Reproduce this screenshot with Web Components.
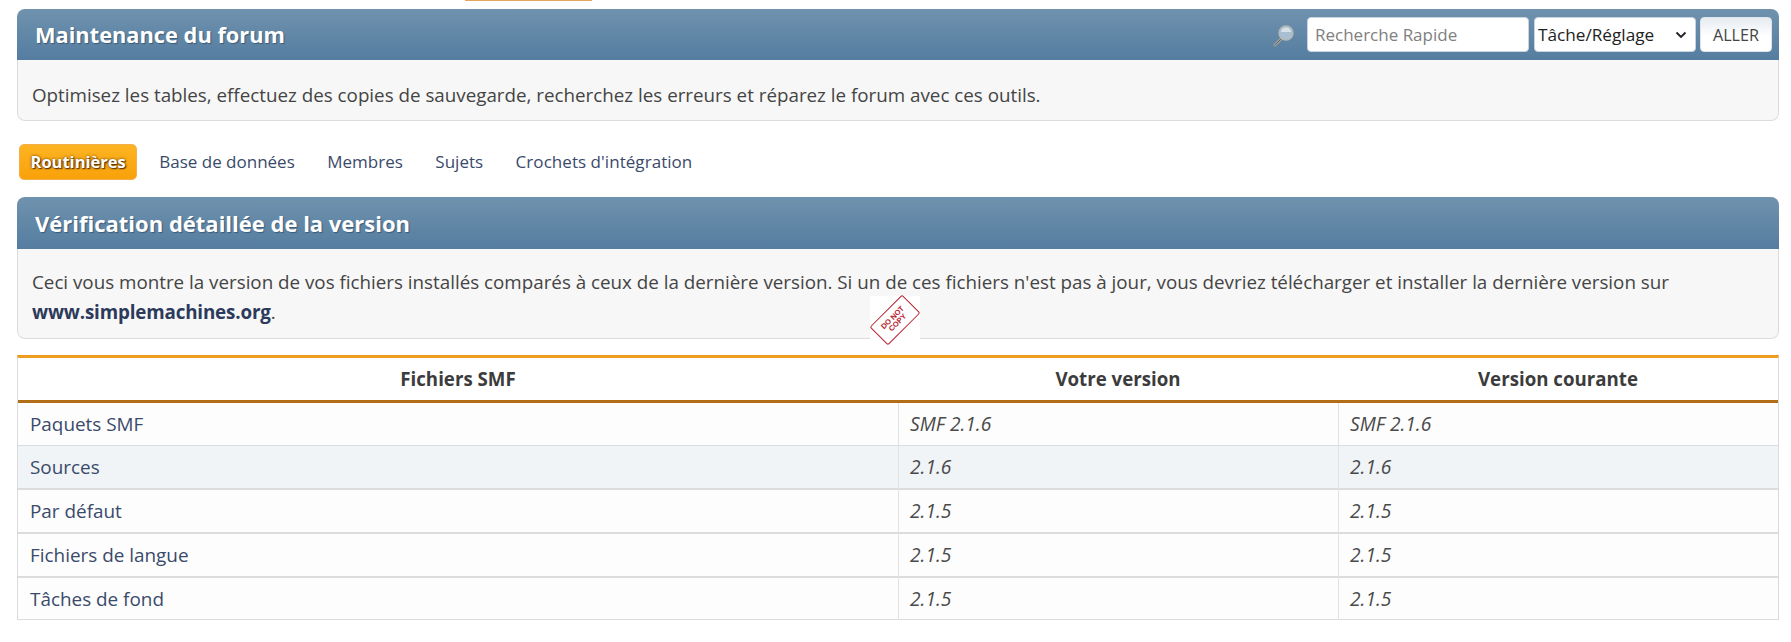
<!DOCTYPE html>
<html lang="fr">
<head>
<meta charset="utf-8">
<title>Maintenance du forum</title>
<style>
  html, body { margin: 0; background: #fff; }
  body { padding: 9px 12px 0 17px; font: 18.8px/1.5 "Open Sans", "Noto Sans", sans-serif; color: #444; overflow: hidden; height: 642px; box-sizing: border-box; position: relative; }
</style>
</head>
<body>
<top-tab></top-tab>
<forum-panel title="Maintenance du forum" tools>
  Optimisez les tables, effectuez des copies de sauvegarde, recherchez les erreurs et réparez le forum avec ces outils.
</forum-panel>
<tab-bar></tab-bar>
<forum-panel title="Vérification détaillée de la version" tall>
  Ceci vous montre la version de vos fichiers installés comparés à ceux de la dernière version. Si un de ces fichiers n'est pas à jour, vous devriez télécharger et installer la dernière version sur <b style="color:#2c3a5c;letter-spacing:-.16px">www.simplemachines.org</b>.
</forum-panel>
<version-table></version-table>
<copy-stamp></copy-stamp>

<script>
class topTab extends HTMLElement {
    constructor() {
        super();
        this.attachShadow({mode: 'open'});
        this.shadowRoot.innerHTML = `
        <style>
            :host { position: absolute; left: 465px; top: 0; width: 127px; height: 1px; background: #e3a55f; }
        </style>`;
    }
}
customElements.define("top-tab", topTab);

class forumPanel extends HTMLElement {
    constructor() {
        super();
        this.attachShadow({mode: 'open'});
    }
    getStyles() {
        return `
        <style>
            :host { display: block; }
            .head {
                height: 51px;
                box-sizing: border-box;
                display: flex;
                align-items: center;
                justify-content: space-between;
                padding: 0 7px 0 18px;
                background: linear-gradient(#6f92ae, #557da0);
                border-radius: 8px 8px 0 0;
            }
            h3 {
                margin: 0;
                font-size: 22px;
                font-weight: 700;
                color: #fff;
                text-shadow: 1px 1px 1px #3c5a76;
            }
            :host([tools]) h3 { font-size: 21.8px; padding-top: 1px; }
            .body {
                padding: 20px 14px 0;
                box-sizing: border-box;
                height: 61px;
                background: #f7f7f7;
                border: 1px solid #dcdcdc;
                border-top: 0;
                border-radius: 0 0 8px 8px;
                line-height: 30px;
            }
            :host([tall]) .head { height: 52px; }
            :host([tall]) .body { height: 90px; padding-top: 18px; }
            .tools { display: flex; align-items: center; gap: 5px; }
            .tools svg.lens { margin-right: 6px; }
            input, select, button {
                font: 17.2px "Open Sans", "Noto Sans", sans-serif;
                box-sizing: border-box;
                height: 35px;
                border: 1px solid #c9d4de;
                border-radius: 4px;
                background: #fff;
                outline: none;
            }
            input { width: 222px; padding: 0 7px; font-size: 17px; }
            input::placeholder { color: #808080; opacity: 1; }
            .pick { position: relative; display: flex; }
            select { width: 162px; color: #222; padding: 0 0 0 3px; appearance: none; -webkit-appearance: none; }
            .pick svg { position: absolute; left: 141px; top: 14px; pointer-events: none; }
            button { width: 72px; margin-left: -1px; color: #444; background: linear-gradient(#e6ecf2, #fff 55%); border-color: #dfe5ea; font-size: 16.2px; padding: 0; }
        </style>`;
    }
    connectedCallback() {
        const tools = this.hasAttribute("tools") ? `
            <div class="tools">
                <svg class="lens" width="24" height="24" viewBox="0 0 24 24">
                    <path d="M9 16 L3 22" stroke="#a3a39b" stroke-width="2.8" stroke-linecap="round"/>
                    <path d="M9 16 L3 22" stroke="#5f6466" stroke-width="1" stroke-linecap="round"/>
                    <circle cx="14" cy="10" r="7" fill="#a9bfd1" stroke="#b4b8b4" stroke-width="1.4"/>
                    <path d="M8.8 9 a5.2 4.4 0 0 1 10.4 0 z" fill="#d5e0e8"/>
                </svg>
                <input placeholder="Recherche Rapide">
                <div class="pick">
                    <select><option>Tâche/Réglage</option></select>
                    <svg width="12" height="8" viewBox="0 0 12 8"><path d="M1.5 1.5 L6 6 L10.5 1.5" fill="none" stroke="#222" stroke-width="1.9"/></svg>
                </div>
                <button>ALLER</button>
            </div>` : "";
        this.shadowRoot.innerHTML = `
            ${this.getStyles()}
            <div class="head"><h3>${this.getAttribute("title")}</h3>${tools}</div>
            <div class="body"><slot></slot></div>`;
    }
}
customElements.define("forum-panel", forumPanel);

class tabBar extends HTMLElement {
    constructor() {
        super();
        this.attachShadow({mode: 'open'});
        const items = ["Base de données", "Membres", "Sujets", "Crochets d'intégration"];
        this.shadowRoot.innerHTML = `
        <style>
            :host { display: flex; align-items: center; height: 36px; margin: 23px 0 17px 2px; font-size: 17px; color: #3a4a6b; }
            .active {
                height: 36px; box-sizing: border-box; padding: 0 10.5px;
                display: flex; align-items: center;
                background: linear-gradient(#fdb422, #f9a10a);
                border: 1px solid #f3b04a;
                border-radius: 5px;
                color: #fff; font-weight: 700; font-size: 16.5px;
                text-shadow: 0 0 3px #5a3300, 1px 1px 1px #5a3300;
                margin-right: 11px;
            }
            a { padding: 0 11px; margin-right: 10.5px; }
            a:last-child { letter-spacing: .05px; }
        </style>
        <span class="active">Routinières</span>
        ${items.map(i => `<a>${i}</a>`).join("")}`;
    }
}
customElements.define("tab-bar", tabBar);

class versionTable extends HTMLElement {
    constructor() {
        super();
        this.attachShadow({mode: 'open'});
    }
    connectedCallback() {
        const rows = [
            ["Paquets SMF", "SMF 2.1.6", "SMF 2.1.6"],
            ["Sources", "2.1.6", "2.1.6"],
            ["Par défaut", "2.1.5", "2.1.5"],
            ["Fichiers de langue", "2.1.5", "2.1.5"],
            ["Tâches de fond", "2.1.5", "2.1.5"]
        ];
        this.shadowRoot.innerHTML = `
        <style>
            :host { display: block; margin-top: 16px; width: 1762px; }
            .t {
                display: grid;
                grid-template-columns: 880px 440px 1fr;
                border-top: 3px solid #f09c1e;
                border-left: 1px solid #dcdcdc;
                border-right: 1px solid #dcdcdc;
                border-bottom: 1px solid #dcdcdc;
                font-size: 18.9px;
            }
            .h {
                height: 42px; display: flex; align-items: center; justify-content: center;
                font-weight: 700; color: #3c3c3c; font-size: 18.7px;
                border-bottom: 3px solid #b26e16;
            }
            .c {
                height: 44px; box-sizing: border-box;
                display: flex; align-items: center; padding: 0 12px;
                background: #fdfdfd;
                border-bottom: 2px solid #dcdcdc;
            }
            .n { color: #3a4a6b; }
            .v { font-style: italic; color: #4a4a4a; border-left: 1px solid #e2e2e2; padding-left: 11px; font-size: 19.2px; }
            .alt { background: #f0f4f7; }
            .last { border-bottom: 0; height: 41px; padding-top: 1px; }
            .first { height: 43px; border-bottom-width: 1px; }
        </style>
        <div class="t">
            <div class="h">Fichiers SMF</div><div class="h">Votre version</div><div class="h">Version courante</div>
            ${rows.map((r, i) => {
                const cl = (i === 1 ? " alt" : "") + (i === 4 ? " last" : "") + (i === 0 ? " first" : "");
                return `<div class="c n${cl}">${r[0]}</div><div class="c v${cl}">${r[1]}</div><div class="c v${cl}">${r[2]}</div>`;
            }).join("")}
        </div>`;
    }
}
customElements.define("version-table", versionTable);

class copyStamp extends HTMLElement {
    constructor() {
        super();
        this.attachShadow({mode: 'open'});
        this.shadowRoot.innerHTML = `
        <style>
            :host { position: absolute; left: 870px; top: 296px; width: 50px; height: 50px; background: #fff; }
            .s {
                position: absolute; left: 2px; top: 11px; width: 46px; height: 26px; box-sizing: border-box;
                border: 1.5px solid #b5202f; border-radius: 2px;
                transform: rotate(-45deg);
                color: #b5202f; font: 700 7.5px/7.5px "Liberation Sans", sans-serif;
                text-align: center; display: flex; align-items: center; justify-content: center;
            }
        </style>
        <div class="s">DO NOT<br>COPY</div>`;
    }
}
customElements.define("copy-stamp", copyStamp);
</script>
</body>
</html>
